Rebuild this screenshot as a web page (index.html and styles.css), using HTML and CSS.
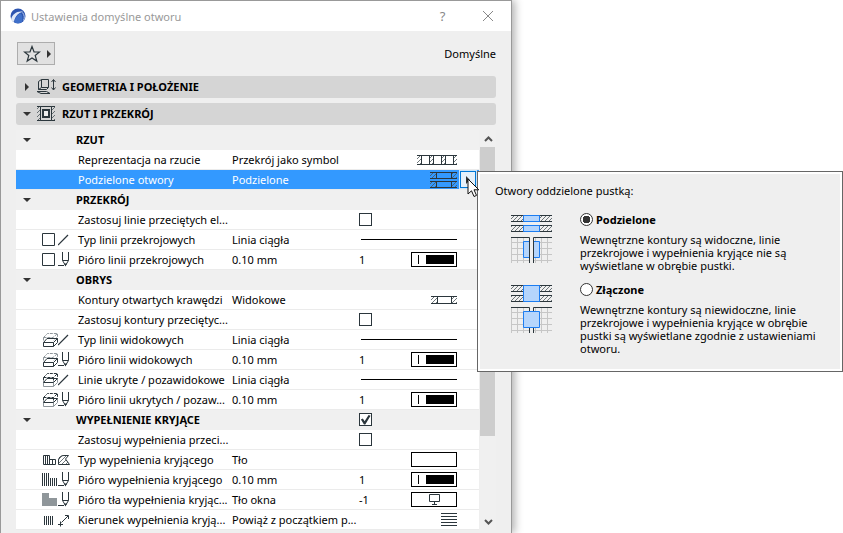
FILE: index.html
```
<!DOCTYPE html>
<html lang="pl">
<head>
    <title>Ustawienia domyślne otworu</title>
    <meta charset="utf-8">
    <meta name="viewport" content="width=device-width, initial-scale=1">
    <link rel="stylesheet" href="styles.css">
</head>
<body>
    <!-- shared icons -->
    <svg class="sprite" aria-hidden="true">
        <defs>
            <pattern id="hatch" width="4" height="4" patternUnits="userSpaceOnUse">
                <path d="M-1 5L5 -1M-1 1L1 -1M3 5L5 3" stroke="#4a555b" stroke-width=".8"/>
            </pattern>
            <pattern id="grid" width="6" height="6" patternUnits="userSpaceOnUse">
                <path d="M.5 0V6M0 3.5H6" stroke="#c6c6c6" fill="none"/>
            </pattern>
        </defs>
        <symbol id="i-square" viewBox="0 0 16 16"><path d="M.5 1.5h12v12H.5z" fill="#fff" stroke="#2b363c"/></symbol>
        <symbol id="i-line" viewBox="0 0 13 16"><path d="M0 13L10 3" stroke="#2b363c" stroke-width="1.2"/></symbol>
        <symbol id="i-pen" viewBox="0 0 13 16"><path d="M4.500 0V8.500L7.500 13.500L10.500 8.500V0M4.500 8.500H10.500M0 13.500H6" fill="none" stroke="#2b363c"/><path d="M6 11.500h3l-1.500 3z" fill="#2b363c"/></symbol>
        <symbol id="i-view" viewBox="0 0 16 16">
            <path d="M1.500 5.500L5.500 1.500H15.500V5L11.500 8.500M1.500 5.500H11L15 2M1.500 5.500V9" fill="none" stroke="#8d959a" stroke-dasharray="3 1"/>
            <path d="M1.500 10.500L5 6.500H15.500L11.500 10.500ZM1.500 10.500V14.500H11.500V10.500M11.500 14.500L15.500 10.500V6.500" fill="none" stroke="#2b363c"/>
        </symbol>
        <symbol id="i-hidden" viewBox="0 0 16 16">
            <path d="M1.500 10.500V14.500H11.500L15.500 10.500V6.500M11.500 10.500V14.500" fill="none" stroke="#8d959a"/>
            <path d="M1.500 10.500L5 6.500H15.500L11.500 10.500Z" fill="none" stroke="#2b363c"/>
            <path d="M1.500 5.500L5.500 1.500H15.500V5M1.500 5.500H11.500L15 2M1.500 5.500V10M11.500 5.500V10" fill="none" stroke="#2b363c" stroke-dasharray="3 1"/>
        </symbol>
        <symbol id="i-fill" viewBox="0 0 16 16"><path d="M1.500 12.500V3.500H7.500V7.500H13.500V12.500ZM3.500 4V12M5.500 4V12M7.500 7V12M10.500 8V12" fill="none" stroke="#2b363c"/></symbol>
        <symbol id="i-fillkind" viewBox="0 0 13 16"><path d="M.5 12.500V8C1 5 3 3.500 6 3.500H10.500L7.500 7L11.500 12.500Z" fill="url(#hatch)" stroke="#2b363c"/></symbol>
        <symbol id="i-bars" viewBox="0 0 16 16"><path d="M.5 1V14M2.500 1V14M4.500 1V14M6.500 1V14M8.500 6V14M10.500 6V14M12.500 6V14M14.500 6V14" stroke="#2b363c"/></symbol>
        <symbol id="i-ground" viewBox="0 0 16 16"><path d="M0 1H7V6H15V14H0z" fill="#8f969a"/></symbol>
        <symbol id="i-fence" viewBox="0 0 16 16"><path d="M2.500 4V13M4.500 4V13M6.500 4V13M8.500 4V13M10.500 4V13" stroke="#2b363c"/></symbol>
        <symbol id="i-direction" viewBox="0 0 13 16"><path d="M3.500 10.500L10 4M7 3.500H10.500V7M2.500 9.500V14.500M0 12.500H5" fill="none" stroke="#2b363c"/></symbol>
    </svg>

    <main class="dialog">
        <header class="titlebar">
            <svg class="logo" viewBox="0 0 16 16" aria-hidden="true">
                <circle cx="8" cy="8" r="7.500" fill="#2d55b0"/>
                <path d="M1 11.500C2.500 6 7 2.800 13 3.800C9 4.500 5 8 4 14C2.500 13.500 1.500 12.500 1 11.500Z" fill="#dfe9f8"/>
                <path d="M4.500 14.500C5 9 8 6 11 5.500C12.500 7.500 12.800 11 12 14C9.500 15.500 7 15.600 4.500 14.500Z" fill="#3f70ca"/>
                <path d="M12.500 4.500C14.500 7 14.800 10 13.500 12.500" fill="none" stroke="#b5cbf0"/>
            </svg>
            <h1>Ustawienia domyślne otworu</h1>
            <button type="button" class="title-btn" aria-label="Pomoc">?</button>
            <button type="button" class="title-btn" aria-label="Zamknij"><svg width="12" height="12" viewBox="0 0 12 12"><path d="M1 1L11 11M11 1L1 11" stroke="#888"/></svg></button>
        </header>

        <div class="toolbar">
            <button type="button" class="favorites" aria-label="Ulubione">
                <svg width="18" height="18" viewBox="0 0 18 18"><path d="M9 1.500L11 6.800L16.500 7L12.200 10.500L13.800 16L9 12.900L4.200 16L5.800 10.500L1.500 7L7 6.800Z" fill="none" stroke="#2b363c" stroke-width="1.200"/></svg>
                <span class="arrow-right"></span>
            </button>
            <span>Domyślne</span>
        </div>

        <button type="button" class="panel-bar">
            <span class="arrow-box"><span class="arrow-right"></span></span>
            <svg width="20" height="17" viewBox="0 0 20 17"><path d="M4.500 1.500H11.500V9.500H4.500ZM4.500 1.500L1.500 3.500V11.500H9.500L11.500 9.500M1.500 11.500L4.500 9.500M0 13.500L4 15.500H13L9.500 13.500ZM16.500 2V11.500M14.500 4L16.500 1.500L18.500 4M14.500 9.500L16.500 12L18.500 9.500" fill="none" stroke="#2b363c"/></svg>
            GEOMETRIA I POŁOŻENIE
        </button>
        <button type="button" class="panel-bar" aria-expanded="true">
            <span class="arrow-box"><span class="arrow-down"></span></span>
            <svg width="20" height="17" viewBox="0 0 20 17"><path d="M0 1.500H18V15.500H0z" fill="url(#hatch)"/><path d="M0 1.500H18M0 15.500H18" stroke="#2b363c"/><path d="M3.500 1.500H14.500V15.500H3.500z" fill="#d5d5d5" stroke="#2b363c"/><path d="M6 5H12V12H6z" fill="#eee" stroke="#2b363c" stroke-width="2"/></svg>
            RZUT I PRZEKRÓJ
        </button>

        <div class="list">
            <table class="props">
                <colgroup>
                    <col class="col-icons">
                    <col class="col-label">
                    <col class="col-value">
                    <col class="col-index">
                    <col class="col-preview">
                    <col class="col-more">
                </colgroup>
                <tbody>
                    <tr class="group">
                        <td><span class="arrow-down"></span></td>
                        <th colspan="5" scope="rowgroup">RZUT</th>
                    </tr>
                    <tr>
                        <td></td>
                        <td>Reprezentacja na rzucie</td>
                        <td>Przekrój jako symbol</td>
                        <td colspan="2" class="right"><svg width="40" height="10" viewBox="0 0 40 10"><path d="M0 1H4V9H0zM12 1H16V9H12zM24 1H28V9H24zM36 1H40V9H36z" fill="url(#hatch)"/><path d="M0 .5H40M0 9.500H40M4.500 1V9M12.500 1V9M16.500 1V9M24.500 1V9M28.500 1V9M36.500 1V9" stroke="#2b363c"/></svg></td>
                        <td></td>
                    </tr>
                    <tr class="selected">
                        <td></td>
                        <td>Podzielone otwory</td>
                        <td>Podzielone</td>
                        <td colspan="2" class="right"><svg width="27" height="16" viewBox="0 0 27 16"><path d="M0 1H6V6H0zM21 1H27V6H21zM0 10H6V15H0zM21 10H27V15H21z" fill="url(#hatch)"/><path d="M0 .5H27M0 6.500H27M0 9.500H27M0 15.500H27M6.500 0V7M21.500 0V7M6.500 9V16M21.500 9V16" stroke="#2b363c"/></svg></td>
                        <td class="more-cell">
                            <button type="button" class="more" aria-label="Wybierz"><span class="arrow-right"></span></button>
                            <svg class="cursor" width="13" height="20" viewBox="0 0 13 20" aria-hidden="true"><path d="M1 1V16L4.500 12.800L7 18.500L9.500 17.400L7 11.800H11.800Z" fill="#fff" stroke="#111"/></svg>
                            <form class="popup">
                                <p class="popup-title">Otwory oddzielone pustką:</p>
                                <div class="option">
                                    <svg width="41" height="49" viewBox="0 0 41 49" aria-hidden="true">
                                        <path d="M0 1H12V6H0zM29 1H41V6H29zM0 11H12V16H0zM29 11H41V16H29z" fill="url(#hatch)"/>
                                        <path d="M0 .5H41M0 6.500H41M0 10.500H41M0 16.500H41" stroke="#2b363c"/>
                                        <path d="M12.500 .5H28.500V6.500H12.500zM12.500 10.500H28.500V16.500H12.500z" fill="#b5d5fc" stroke="#1c7df2"/>
                                        <path d="M0 23H18V48H0zM23 23H41V48H23z" fill="url(#grid)"/>
                                        <path d="M12.500 26.500H18.500V42.500H12.500zM22.500 26.500H28.500V42.500H22.500z" fill="#b5d5fc" stroke="#1c7df2"/>
                                        <path d="M0 22.500H18.500V48M41 22.500H22.500V48" fill="none" stroke="#2b363c"/>
                                    </svg>
                                    <div>
                                        <label><input type="radio" name="void" checked>Podzielone</label>
                                        <p>Wewnętrzne kontury są widoczne, linie przekrojowe i wypełnienia kryjące nie są wyświetlane w obrębie pustki.</p>
                                    </div>
                                </div>
                                <div class="option">
                                    <svg width="41" height="49" viewBox="0 0 41 49" aria-hidden="true">
                                        <path d="M0 1H12V6H0zM29 1H41V6H29zM0 11H12V16H0zM29 11H41V16H29z" fill="url(#hatch)"/>
                                        <path d="M0 .5H41M0 6.500H41M0 10.500H41M0 16.500H41" stroke="#2b363c"/>
                                        <path d="M12.500 .5H28.500V16.500H12.500z" fill="#b5d5fc" stroke="#1c7df2"/>
                                        <path d="M0 23H18V48H0zM23 23H41V48H23z" fill="url(#grid)"/>
                                        <path d="M0 22.500H18.500V48M41 22.500H22.500V48" fill="none" stroke="#2b363c"/>
                                        <path d="M12.500 26.500H28.500V42.500H12.500z" fill="#b5d5fc" stroke="#1c7df2"/>
                                    </svg>
                                    <div>
                                        <label><input type="radio" name="void">Złączone</label>
                                        <p>Wewnętrzne kontury są niewidoczne, linie przekrojowe i wypełnienia kryjące w obrębie pustki są wyświetlane zgodnie z ustawieniami otworu.</p>
                                    </div>
                                </div>
                            </form>
                        </td>
                    </tr>
                    <tr class="group">
                        <td><span class="arrow-down"></span></td>
                        <th colspan="5" scope="rowgroup">PRZEKRÓJ</th>
                    </tr>
                    <tr>
                        <td></td>
                        <td><label for="cut-lines">Zastosuj linie przeciętych el...</label></td>
                        <td></td>
                        <td><input type="checkbox" id="cut-lines"></td>
                        <td></td>
                        <td></td>
                    </tr>
                    <tr>
                        <td class="icons"><svg width="16" height="16"><use href="#i-square"/></svg><svg width="13" height="16"><use href="#i-line"/></svg></td>
                        <td>Typ linii przekrojowych</td>
                        <td>Linia ciągła</td>
                        <td colspan="2"><hr class="line-sample"></td>
                        <td></td>
                    </tr>
                    <tr>
                        <td class="icons"><svg width="16" height="16"><use href="#i-square"/></svg><svg width="13" height="16"><use href="#i-pen"/></svg></td>
                        <td>Pióro linii przekrojowych</td>
                        <td>0.10 mm</td>
                        <td>1</td>
                        <td><button type="button" class="swatch pen" aria-label="Pióro 1"></button></td>
                        <td></td>
                    </tr>
                    <tr class="group">
                        <td><span class="arrow-down"></span></td>
                        <th colspan="5" scope="rowgroup">OBRYS</th>
                    </tr>
                    <tr>
                        <td></td>
                        <td>Kontury otwartych krawędzi</td>
                        <td>Widokowe</td>
                        <td colspan="2" class="right"><svg width="26" height="8" viewBox="0 0 26 8"><path d="M0 1H6V7H0zM20 1H26V7H20z" fill="url(#hatch)"/><path d="M0 .5H26M0 7.500H26M6.500 1V7M20.500 1V7" stroke="#2b363c"/></svg></td>
                        <td></td>
                    </tr>
                    <tr>
                        <td></td>
                        <td><label for="cut-outlines">Zastosuj kontury przeciętyc...</label></td>
                        <td></td>
                        <td><input type="checkbox" id="cut-outlines"></td>
                        <td></td>
                        <td></td>
                    </tr>
                    <tr>
                        <td class="icons"><svg width="16" height="16"><use href="#i-view"/></svg><svg width="13" height="16"><use href="#i-line"/></svg></td>
                        <td>Typ linii widokowych</td>
                        <td>Linia ciągła</td>
                        <td colspan="2"><hr class="line-sample"></td>
                        <td></td>
                    </tr>
                    <tr>
                        <td class="icons"><svg width="16" height="16"><use href="#i-view"/></svg><svg width="13" height="16"><use href="#i-pen"/></svg></td>
                        <td>Pióro linii widokowych</td>
                        <td>0.10 mm</td>
                        <td>1</td>
                        <td><button type="button" class="swatch pen" aria-label="Pióro 1"></button></td>
                        <td></td>
                    </tr>
                    <tr>
                        <td class="icons"><svg width="16" height="16"><use href="#i-hidden"/></svg><svg width="13" height="16"><use href="#i-line"/></svg></td>
                        <td>Linie ukryte / pozawidokowe</td>
                        <td>Linia ciągła</td>
                        <td colspan="2"><hr class="line-sample"></td>
                        <td></td>
                    </tr>
                    <tr>
                        <td class="icons"><svg width="16" height="16"><use href="#i-hidden"/></svg><svg width="13" height="16"><use href="#i-pen"/></svg></td>
                        <td>Pióro linii ukrytych / pozaw...</td>
                        <td>0.10 mm</td>
                        <td>1</td>
                        <td><button type="button" class="swatch pen" aria-label="Pióro 1"></button></td>
                        <td></td>
                    </tr>
                    <tr class="group">
                        <td><span class="arrow-down"></span></td>
                        <th colspan="2" scope="rowgroup"><label for="cover">WYPEŁNIENIE KRYJĄCE</label></th>
                        <td colspan="3"><input type="checkbox" id="cover" checked></td>
                    </tr>
                    <tr>
                        <td></td>
                        <td><label for="cut-fills">Zastosuj wypełnienia przeci...</label></td>
                        <td></td>
                        <td><input type="checkbox" id="cut-fills"></td>
                        <td></td>
                        <td></td>
                    </tr>
                    <tr>
                        <td class="icons"><svg width="16" height="16"><use href="#i-fill"/></svg><svg width="13" height="16"><use href="#i-fillkind"/></svg></td>
                        <td>Typ wypełnienia kryjącego</td>
                        <td>Tło</td>
                        <td></td>
                        <td><button type="button" class="swatch" aria-label="Tło"></button></td>
                        <td></td>
                    </tr>
                    <tr>
                        <td class="icons"><svg width="16" height="16"><use href="#i-bars"/></svg><svg width="13" height="16"><use href="#i-pen"/></svg></td>
                        <td>Pióro wypełnienia kryjącego</td>
                        <td>0.10 mm</td>
                        <td>1</td>
                        <td><button type="button" class="swatch pen" aria-label="Pióro 1"></button></td>
                        <td></td>
                    </tr>
                    <tr>
                        <td class="icons"><svg width="16" height="16"><use href="#i-ground"/></svg><svg width="13" height="16"><use href="#i-pen"/></svg></td>
                        <td>Pióro tła wypełnienia kryjąc...</td>
                        <td>Tło okna</td>
                        <td>-1</td>
                        <td><button type="button" class="swatch" aria-label="Tło okna"><svg width="11" height="11" viewBox="0 0 11 11"><path d="M.5 .5H10.500V7.500H.5zM5.500 8V10M3 10.500H8" fill="none" stroke="#2b363c"/></svg></button></td>
                        <td></td>
                    </tr>
                    <tr>
                        <td class="icons"><svg width="16" height="16"><use href="#i-fence"/></svg><svg width="13" height="16"><use href="#i-direction"/></svg></td>
                        <td>Kierunek wypełnienia kryją...</td>
                        <td>Powiąż z początkiem p...</td>
                        <td colspan="2" class="right"><svg width="16" height="13" viewBox="0 0 16 13"><path d="M0 .5H16M0 3.500H16M0 6.500H16M0 9.500H16M0 12.500H16" stroke="#2b363c"/></svg></td>
                        <td></td>
                    </tr>
                </tbody>
            </table>
            <div class="scrollbar">
                <button type="button" aria-label="W górę"><svg width="9" height="6" viewBox="0 0 9 6"><path d="M1 5L4.500 1.500L8 5" fill="none" stroke="#555" stroke-width="2"/></svg></button>
                <div class="track"><div class="thumb"></div></div>
                <button type="button" aria-label="W dół"><svg width="9" height="6" viewBox="0 0 9 6"><path d="M1 1L4.500 4.500L8 1" fill="none" stroke="#555" stroke-width="2"/></svg></button>
            </div>
        </div>
    </main>
</body>
</html>
```
FILE: styles.css
```
* {
    box-sizing: border-box;
}
body {
    margin: 0;
    padding-right: 331px;
    background: #fff;
    color: #000;
    font: 11px/13px "Noto Sans", "Open Sans", sans-serif;
}
button, input {
    font: inherit;
    color: inherit;
    margin: 0;
    padding: 0;
}
svg {
    display: block;
    flex: none;
}
.sprite {
    position: absolute;
    width: 0;
    height: 0;
}
.dialog {
    min-height: 100vh;
    padding-bottom: 3px;
    border: 1px solid #999;
    border-bottom: 0;
    background: #efefef;
    box-shadow: 3px 0 8px rgba(0, 0, 0, .3);
}

/* title bar */
.titlebar {
    display: flex;
    align-items: center;
    height: 30px;
    padding: 0 16px 0 9px;
    background: #fff;
}
.logo {
    width: 16px;
    height: 16px;
    margin-right: 5px;
}
.titlebar h1 {
    flex: 1;
    margin: 0;
    font-size: 11px;
    font-weight: normal;
    color: #999;
}
.title-btn {
    display: flex;
    justify-content: center;
    width: 15px;
    margin-left: 30px;
    border: 0;
    background: none;
    font-size: 13px;
    color: #888;
}

/* favourites row */
.toolbar {
    display: flex;
    align-items: center;
    justify-content: space-between;
    padding: 11px 15px;
}
.favorites {
    display: flex;
    align-items: center;
    justify-content: space-between;
    width: 38px;
    height: 23px;
    margin-left: 1px;
    padding: 0 3px 0 5px;
    border: 1px solid #adadad;
    background: #e1e1e1;
}
.arrow-right,
.arrow-down {
    display: block;
    width: 0;
    height: 0;
    border: 4px solid transparent;
}
.arrow-right {
    border-left: 4px solid #333;
    border-right: 0;
}
.arrow-down {
    border-top: 4px solid #333;
    border-bottom: 0;
}
.panel-bar {
    display: flex;
    align-items: center;
    width: calc(100% - 30px);
    height: 22px;
    margin: 0 15px 5px;
    padding-bottom: 1px;
    border: 0;
    border-radius: 3px;
    background: #d5d5d5;
    font-weight: bold;
}
.panel-bar svg {
    margin-right: 5px;
}
.arrow-box {
    display: flex;
    justify-content: center;
    width: 21px;
}

/* property list */
.list {
    display: flex;
    gap: 1px;
    padding: 0 15px;
}
.props {
    flex: 1;
    width: 100%;
    table-layout: fixed;
    border-collapse: collapse;
    background: #fff;
}
.col-icons {
    width: 62px;
}
.col-label {
    width: 154px;
}
.col-index {
    width: 52px;
}
.col-preview {
    width: 46px;
}
.col-more {
    width: 22px;
}
.props td,
.props th {
    height: 20px;
    padding: 0 0 1px;
    text-align: left;
    vertical-align: middle;
    white-space: nowrap;
    box-shadow: inset 0 -1px #ebebeb;
}
.props .group td,
.props .group th {
    background: #f0f0f0;
    box-shadow: none;
}
.props .group th {
    text-indent: -2px;
}
.group .arrow-down {
    margin-left: 7px;
}
.props .selected td {
    background: #3399ff;
    color: #fff;
}
.icons svg {
    display: inline-block;
    vertical-align: middle;
}
.icons svg:first-child {
    margin-left: 26px;
}
.right svg {
    margin-left: auto;
}
.line-sample {
    margin: 0 0 0 2px;
    border: 0;
    border-top: 1px solid #000;
}
.swatch {
    display: flex;
    align-items: center;
    justify-content: center;
    width: 100%;
    height: 15px;
    border: 1px solid #000;
    background: #fff;
}
.pen {
    padding: 2px 2px 2px 6px;
    justify-content: space-between;
}
.pen::before {
    content: "";
    width: 1px;
    height: 9px;
    background: #000;
}
.pen::after {
    content: "";
    width: 28px;
    height: 9px;
    background: #000;
}
input[type="checkbox"] {
    appearance: none;
    display: block;
    width: 13px;
    height: 13px;
    border: 1px solid #2b363c;
    background: #fff;
}
input[type="checkbox"]:checked::before {
    content: "";
    display: block;
    height: 11px;
    background: #2b363c;
    clip-path: polygon(8% 50%, 26% 42%, 42% 66%, 78% 8%, 96% 16%, 48% 96%, 36% 96%);
}

/* option popup */
.more-cell {
    position: relative;
}
.more {
    display: flex;
    align-items: center;
    justify-content: center;
    width: 16px;
    height: 17px;
    margin-left: 3px;
    border: 1px solid #0078d7;
    outline: 1px solid #cce4f7;
    background: #e5f1fb;
}
.cursor {
    position: absolute;
    z-index: 3;
    left: 10px;
    top: 8px;
}
.popup {
    position: absolute;
    z-index: 2;
    left: 20px;
    top: 1px;
    width: 366px;
    padding: 12px 15px 16px;
    border: 1px solid #666;
    outline: 2px solid #fff;
    outline-offset: -3px;
    background: #efefef;
    color: #000;
    white-space: normal;
}
.popup p {
    margin: 0;
}
.popup .popup-title {
    margin-bottom: 16px;
    padding-left: 2px;
}
.option {
    display: flex;
    gap: 28px;
    min-height: 70px;
    padding-left: 18px;
}
.option svg {
    margin-top: 2px;
}
.option label {
    display: flex;
    align-items: center;
    gap: 3px;
    margin-bottom: 7px;
    font-weight: bold;
}
input[type="radio"] {
    appearance: none;
    width: 13px;
    height: 13px;
    border: 1px solid #333;
    border-radius: 50%;
    background: #fff;
}
input[type="radio"]:checked {
    background: radial-gradient(circle, #333 0 4px, #fff 4px);
}

/* scrollbar */
.scrollbar {
    display: flex;
    flex-direction: column;
    width: 16px;
}
.scrollbar button {
    display: flex;
    align-items: center;
    justify-content: center;
    height: 17px;
    border: 0;
    background: #f0f0f0;
}
.track {
    flex: 1;
    background: #f0f0f0;
}
.thumb {
    width: 15px;
    height: 79%;
    background: #cdcdcd;
}
```
